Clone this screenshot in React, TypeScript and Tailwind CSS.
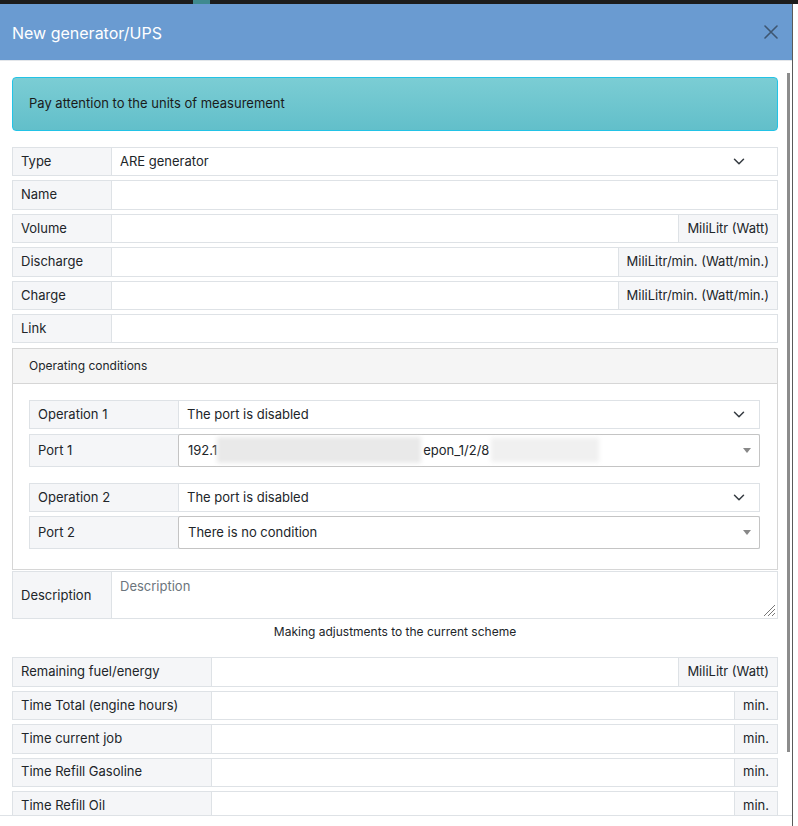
import React from "react";

type RowProps = {
  label: string;
  labelWidth?: string;
  value?: string;
  unit?: string;
  select?: boolean;
};

function Chevron() {
  return (
    <svg width="12" height="9" viewBox="0 0 16 12" fill="none" stroke="#343a40" strokeWidth="2" strokeLinecap="round" strokeLinejoin="round">
      <path d="M2 3l6 6 6-6" />
    </svg>
  );
}

function Caret() {
  return <span className="w-0 h-0 border-l-[4px] border-r-[4px] border-t-[5px] border-l-transparent border-r-transparent border-t-[#888]" />;
}

function Row({ label, labelWidth = "w-[99px]", value, unit, select }: RowProps) {
  return (
    <div className="flex h-[29.4px] border border-[#dee2e6] text-[13px] text-[#212529] shrink-0">
      <div className={`${labelWidth} shrink-0 bg-[#f5f6f8] border-r border-[#dee2e6] flex items-center px-[8px]`}>{label}</div>
      <div className="flex-1 flex items-center justify-between bg-white pl-[8px] pr-[32px]">
        <span>{value}</span>
        {select && <Chevron />}
      </div>
      {unit && <div className="shrink-0 bg-[#f5f6f8] border-l border-[#dee2e6] flex items-center px-[8px]">{unit}</div>}
    </div>
  );
}

function Condition({ n, port }: { n: number; port: React.ReactNode }) {
  return (
    <div className="flex flex-col gap-[4.5px]">
      <div className="flex h-[29px] border border-[#dee2e6] text-[13px] text-[#212529]">
        <div className="w-[149px] shrink-0 bg-[#f5f6f8] border-r border-[#dee2e6] flex items-center px-[8px]">Operation {n}</div>
        <div className="flex-1 flex items-center justify-between pl-[8px] pr-[14px]">
          <span>The port is disabled</span>
          <Chevron />
        </div>
      </div>
      <div className="flex h-[33px] border border-[#dee2e6] text-[13px] text-[#212529]">
        <div className="w-[149px] shrink-0 bg-[#f5f6f8] flex items-center px-[8px]">Port {n}</div>
        <div className="flex-1 flex items-center justify-between border border-[#c4c4c4] rounded-[2px] bg-white pl-[9px] pr-[8px] -m-px">
          <div className="flex items-center">{port}</div>
          <Caret />
        </div>
      </div>
    </div>
  );
}

export default function App() {
  return (
    <div className="w-[798px] h-[826px] bg-white flex flex-col overflow-hidden font-['Inter',sans-serif]">
      {/* page nav behind the modal */}
      <div className="h-[4px] bg-[#1c1c1c] relative shrink-0">
        <div className="absolute left-[193px] top-0 w-[17px] h-[4px] bg-[#3f8a8f]" />
      </div>

      <div className="flex flex-1 min-h-0">
        <div className="w-[793px] flex flex-col border-r border-[#5a5a5a]">
          {/* header */}
          <div className="h-[57px] shrink-0 bg-[#6a9bd1] border-b border-[#e3e6ea] flex items-center justify-between pl-[12px] pr-[14px]">
            <h1 className="text-white text-[16px] mt-[1px]">New generator/UPS</h1>
            <svg width="14" height="14" viewBox="0 0 14 14" stroke="#3e5671" strokeWidth="1.6" strokeLinecap="round">
              <path d="M1 1l12 12M13 1L1 13" />
            </svg>
          </div>

          {/* body */}
          <div className="relative flex-1 min-h-0 overflow-hidden pl-[12px] pr-[14px] pt-[16px]">
            <div className="absolute right-[2px] top-[12px] w-[3px] h-[679px] bg-[#8c8c8c]" />

            <div className="h-[54px] rounded-[4px] border border-[#22c3e6] bg-gradient-to-b from-[#7bcdd4] to-[#62bfca] flex items-center px-[16px] text-[13px] text-[#1a1a1a]">
              Pay attention to the units of measurement
            </div>

            <div className="flex flex-col gap-[4px] mt-[16px]">
              <Row label="Type" value="ARE generator" select />
              <Row label="Name" />
              <Row label="Volume" unit="MiliLitr (Watt)" />
              <Row label="Discharge" unit="MiliLitr/min. (Watt/min.)" />
              <Row label="Charge" unit="MiliLitr/min. (Watt/min.)" />
              <Row label="Link" />
            </div>

            {/* operating conditions */}
            <div className="mt-[5px] border border-[#d6d6d6]">
              <div className="h-[35px] bg-[#f5f5f5] border-b border-[#d6d6d6] flex items-center px-[16px] text-[12px] text-[#212529]">
                Operating conditions
              </div>
              <div className="pl-[16px] pr-[17px] pt-[16px] pb-[20px] flex flex-col gap-[16px]">
                <Condition
                  n={1}
                  port={
                    <>
                      <span>192.1</span>
                      <span className="w-[204px] h-[26px] bg-[#e9e9e9] blur-[2px]" />
                      <span className="ml-[2px]">epon_1/2/8</span>
                      <span className="ml-[2px] w-[108px] h-[24px] bg-[#f0f0f0] blur-[2px]" />
                    </>
                  }
                />
                <Condition n={2} port={<span>There is no condition</span>} />
              </div>
            </div>

            {/* description */}
            <div className="mt-[1px] flex h-[48px] border border-[#dee2e6] text-[13px] text-[#212529]">
              <div className="w-[99px] shrink-0 bg-[#f5f6f8] border-r border-[#dee2e6] flex items-center px-[8px]">Description</div>
              <div className="flex-1 relative px-[8px] pt-[5px] text-[#6c757d]">
                Description
                <svg className="absolute right-[1px] bottom-[1px]" width="14" height="14" viewBox="0 0 14 14" stroke="#777" strokeWidth="1">
                  <path d="M13 2L2 13M13 6L6 13M13 10L10 13" />
                </svg>
              </div>
            </div>

            <p className="text-center text-[12px] text-[#212529] mt-[4px] leading-[18px]">Making adjustments to the current scheme</p>

            <div className="flex flex-col gap-[4px] mt-[16px]">
              <Row label="Remaining fuel/energy" labelWidth="w-[199px]" unit="MiliLitr (Watt)" />
              <Row label="Time Total (engine hours)" labelWidth="w-[199px]" unit="min." />
              <Row label="Time current job" labelWidth="w-[199px]" unit="min." />
              <Row label="Time Refill Gasoline" labelWidth="w-[199px]" unit="min." />
              <Row label="Time Refill Oil" labelWidth="w-[199px]" unit="min." />
            </div>
          </div>

          {/* footer */}
          <div className="h-[11px] shrink-0 border-t border-[#dee2e6]" />
        </div>
        <div className="flex-1 bg-white" />
      </div>
    </div>
  );
}
